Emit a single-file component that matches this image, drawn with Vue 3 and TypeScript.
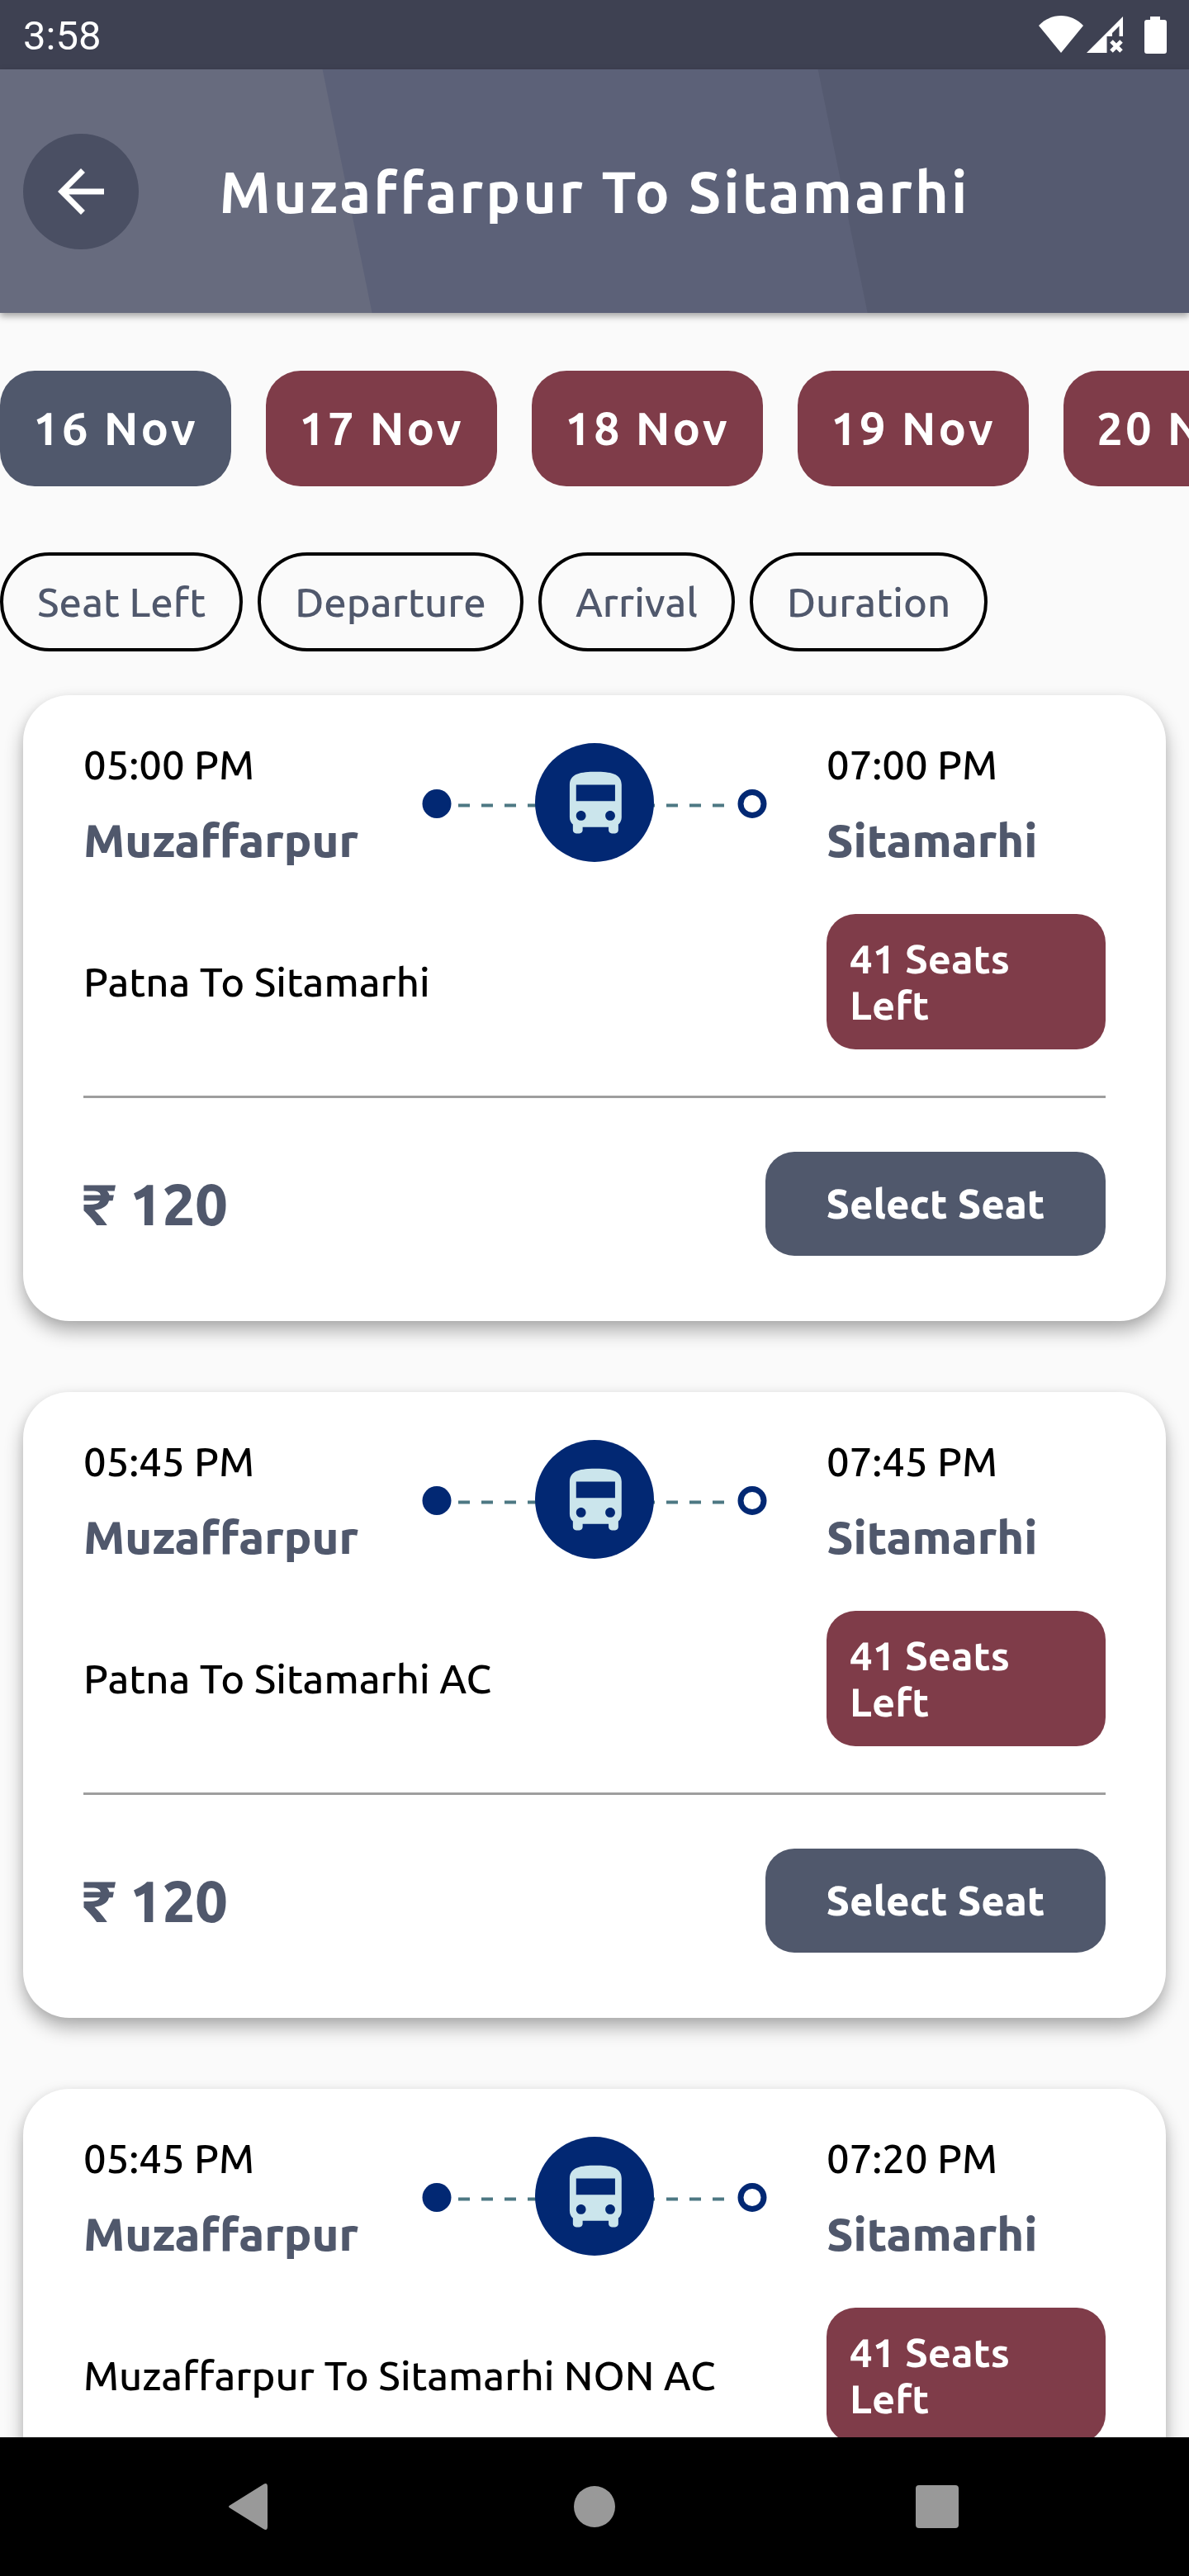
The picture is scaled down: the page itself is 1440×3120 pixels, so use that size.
<script setup lang="ts">
import { ref } from 'vue'

interface Trip {
  id: number
  departs: string
  arrives: string
  from: string
  to: string
  service: string
  seatsLeft: number
  fare: number
}

const dates: string[] = ['16 Nov', '17 Nov', '18 Nov', '19 Nov', '20 Nov']
const activeDate = ref<string>('16 Nov')

const filters: string[] = ['Seat Left', 'Departure', 'Arrival', 'Duration']

const trips: Trip[] = [
  { id: 1, departs: '05:00 PM', arrives: '07:00 PM', from: 'Muzaffarpur', to: 'Sitamarhi', service: 'Patna To Sitamarhi', seatsLeft: 41, fare: 120 },
  { id: 2, departs: '05:45 PM', arrives: '07:45 PM', from: 'Muzaffarpur', to: 'Sitamarhi', service: 'Patna To Sitamarhi AC', seatsLeft: 41, fare: 120 },
  { id: 3, departs: '05:45 PM', arrives: '07:20 PM', from: 'Muzaffarpur', to: 'Sitamarhi', service: 'Muzaffarpur To Sitamarhi NON AC', seatsLeft: 41, fare: 120 },
]
</script>

<template>
  <div class="screen">
    <div class="status">
      <span class="clock">3:58</span>
      <svg class="status-icons" viewBox="0 0 156 48" aria-hidden="true">
        <path d="M0 13C15-3 39-3 54 13L27 46Z" />
        <path d="M58 46L102 2V26H97.500V13.500L89 22V26H82.500V46Z" />
        <path d="M88 32L100 44M100 32L88 44" class="cross" />
        <path d="M135 2H147V6H152Q155 6 155 9V44Q155 47 152 47H131Q128 47 128 44V9Q128 6 131 6H135Z" />
      </svg>
    </div>

    <header class="bar">
      <button class="back" type="button" aria-label="Back">
        <svg viewBox="0 0 24 24" aria-hidden="true">
          <path d="M20 11H7.83l5.59-5.59L12 4l-8 8 8 8 1.410-1.410L7.830 13H20v-2z" />
        </svg>
      </button>
      <h1>Muzaffarpur To Sitamarhi</h1>
    </header>

    <main class="content">
      <div class="dates">
        <button
          v-for="date in dates"
          :key="date"
          type="button"
          class="date"
          :class="{ active: date === activeDate }"
          @click="activeDate = date"
        >{{ date }}</button>
      </div>

      <div class="filters">
        <button v-for="filter in filters" :key="filter" type="button" class="filter">{{ filter }}</button>
      </div>

      <div class="trips">
        <article v-for="trip in trips" :key="trip.id" class="card">
          <div class="route">
            <div class="stop">
              <span class="time">{{ trip.departs }}</span>
              <span class="city">{{ trip.from }}</span>
            </div>
            <svg class="journey" viewBox="0 0 418 148" aria-hidden="true">
              <path d="M44 75.500H368" class="dashes" />
              <circle cx="18" cy="73.500" r="17.500" class="navy" />
              <circle cx="209" cy="72" r="72" class="navy" />
              <circle cx="400" cy="73.500" r="14" class="ring" />
              <g transform="translate(163.200 27) scale(3.930)">
                <path class="bus" d="M4 16c0 .88.39 1.670 1 2.220V20c0 .55.45 1 1 1h1c.55 0 1-.45 1-1v-1h8v1c0 .55.45 1 1 1h1c.55 0 1-.45 1-1v-1.780c.61-.55 1-1.340 1-2.220V6c0-3.500-3.580-4-8-4s-8 .5-8 4v10zm3.500 1c-.83 0-1.500-.67-1.500-1.500S6.670 14 7.500 14s1.500.67 1.500 1.500S8.330 17 7.500 17zm9 0c-.83 0-1.500-.67-1.500-1.500s.67-1.500 1.500-1.500 1.500.67 1.500 1.500-.67 1.500-1.500 1.500zm1.500-6H6V6h12v5z" />
              </g>
            </svg>
            <div class="stop">
              <span class="time">{{ trip.arrives }}</span>
              <span class="city">{{ trip.to }}</span>
            </div>
          </div>

          <div class="service">
            <span class="service-name">{{ trip.service }}</span>
            <span class="seats">{{ trip.seatsLeft }} Seats Left</span>
          </div>

          <div class="purchase">
            <span class="fare">₹ {{ trip.fare }}</span>
            <button type="button" class="select">Select Seat</button>
          </div>
        </article>
      </div>
    </main>

    <nav class="system-nav">
      <button type="button" aria-label="Back">
        <svg viewBox="0 0 84 84"><path d="M16 40L56 15Q61 12 61 18V66Q61 72 56 69L16 44Q12 42 16 40Z" /></svg>
      </button>
      <button type="button" aria-label="Home">
        <svg viewBox="0 0 84 84"><circle cx="42" cy="42" r="25" /></svg>
      </button>
      <button type="button" aria-label="Recent apps">
        <svg viewBox="0 0 84 84"><rect x="16" y="16" width="52" height="52" rx="4" /></svg>
      </button>
    </nav>
  </div>
</template>

<style>
body {
  margin: 0;
  background: #fafafa;
}
</style>

<style scoped>
.screen {
  display: flex;
  flex-direction: column;
  height: 100vh;
  overflow: hidden;
  background: #fafafa;
  color: #000;
  font-family: Ubuntu, "Noto Sans", sans-serif;
  font-size: 49px;
  font-weight: 500;
  line-height: 56px;
}

button {
  margin: 0;
  padding: 0;
  border: 0;
  background: none;
  color: inherit;
  font: inherit;
  cursor: pointer;
}

.status {
  flex: none;
  display: flex;
  align-items: center;
  justify-content: space-between;
  height: 84px;
  padding: 0 26px 0 28px;
  background: #3e4152;
  color: #fff;
}

.clock {
  padding-top: 4px;
  font-family: Roboto, sans-serif;
  font-weight: 400;
}

.status-icons {
  width: 156px;
  height: 48px;
  fill: #fff;
}

.cross {
  fill: none;
  stroke: #fff;
  stroke-width: 5;
}

.bar {
  position: relative;
  z-index: 1;
  flex: none;
  display: grid;
  grid-template-columns: 140px 1fr 140px;
  align-items: center;
  height: 295px;
  padding: 0 28px;
  color: #fff;
  background:
    linear-gradient(78.5deg, #676b7e 441px, transparent 442px),
    linear-gradient(78.5deg, #5c6178 1029px, #555a70 1030px);
  box-shadow: 0 4px 8px rgba(0, 0, 0, 0.35);
}

.back {
  display: grid;
  place-items: center;
  width: 140px;
  height: 140px;
  border-radius: 50%;
  background: #4a4f63;
}

.back svg {
  width: 84px;
  height: 84px;
  fill: #fff;
}

h1 {
  margin: 0;
  font-size: 70px;
  font-weight: 600;
  line-height: 80px;
  letter-spacing: 3px;
  text-align: center;
  white-space: nowrap;
}

.content {
  flex: 1;
  min-height: 0;
  padding-top: 70px;
  overflow: hidden auto;
  scrollbar-width: none;
}

.dates {
  display: flex;
  gap: 42px;
  overflow-x: auto;
  scrollbar-width: none;
}

.date {
  flex: none;
  width: 280px;
  height: 140px;
  border-radius: 42px;
  background: #7f3c49;
  color: #fff;
  font-size: 56px;
  font-weight: 600;
  letter-spacing: 3px;
  white-space: nowrap;
}

.date.active {
  background: #50586c;
}

.filters {
  display: flex;
  gap: 18px;
  margin-top: 80px;
}

.filter {
  height: 120px;
  padding: 0 41px;
  border: 4px solid #000;
  border-radius: 60px;
  color: #50586c;
}

.trips {
  display: flex;
  flex-direction: column;
  gap: 86px;
  padding: 53px 28px 86px;
}

.card {
  padding: 56px 73px 79px;
  border-radius: 56px;
  background: #fff;
  box-shadow: 0 12px 22px rgba(0, 0, 0, 0.3), 0 2px 12px rgba(0, 0, 0, 0.06);
}

.route {
  display: grid;
  grid-template-columns: 338px 1fr 338px;
  align-items: center;
  justify-items: center;
}

.stop {
  display: flex;
  flex-direction: column;
  gap: 32px;
  width: 100%;
}

.city {
  color: #50586c;
  font-size: 56px;
  font-weight: 800;
  line-height: 64px;
}

.journey {
  width: 418px;
  height: 148px;
}

.dashes {
  fill: none;
  stroke: #4d7883;
  stroke-width: 4;
  stroke-dasharray: 14 14;
}

.navy {
  fill: #022873;
}

.ring {
  fill: #fff;
  stroke: #022873;
  stroke-width: 7;
}

.bus {
  fill: #cbe5ec;
}

.service {
  display: flex;
  align-items: center;
  justify-content: space-between;
  margin-top: 57px;
  padding-bottom: 56px;
  border-bottom: 3px solid #9e9e9e;
}

.seats {
  box-sizing: border-box;
  width: 338px;
  padding: 26px 84px 26px 28px;
  border-radius: 35px;
  background: #7f3c49;
  color: #fff;
  font-weight: 600;
}

.purchase {
  display: flex;
  align-items: center;
  justify-content: space-between;
  margin-top: 65px;
}

.fare {
  color: #50586c;
  font-size: 70px;
  font-weight: 800;
  line-height: 80px;
}

.select {
  width: 412px;
  height: 126px;
  border-radius: 35px;
  background: #50586c;
  color: #fff;
  font-weight: 800;
}

.system-nav {
  flex: none;
  display: flex;
  align-items: center;
  justify-content: center;
  height: 168px;
  background: #000;
}

.system-nav button {
  display: grid;
  place-items: center;
  width: 415px;
  height: 168px;
}

.system-nav svg {
  width: 84px;
  height: 84px;
  fill: #999;
}
</style>
